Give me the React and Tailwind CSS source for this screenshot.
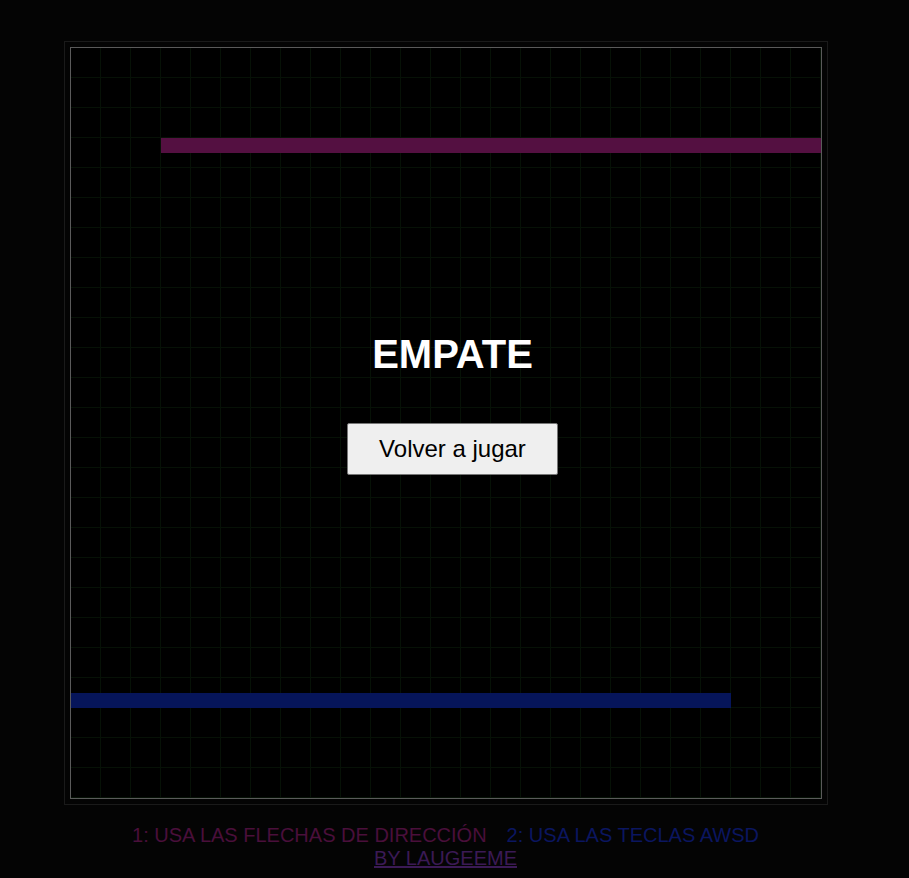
export default function App() {
  return (
    <div className="min-h-screen bg-[#040404] font-['Liberation_Sans',Arial,sans-serif]">
      <div className="w-[891px] flex flex-col items-center pt-[41px]">
        <div className="border border-[#1a1a1a] p-[5px]">
          <div className="relative w-[752px] h-[752px] border border-[#5a5a5a] bg-black bg-[linear-gradient(to_right,transparent_29px,#061106_29px),linear-gradient(to_bottom,transparent_29px,#061106_29px)] bg-[length:30px_30px]">
            {/* snakes */}
            <div className="absolute left-[90px] top-[90px] w-[660px] h-[15px] bg-[#541041]" />
            <div className="absolute left-0 top-[645px] w-[660px] h-[15px] bg-[#06155a]" />

            <div className="absolute inset-0 flex flex-col items-center pt-[283px] pl-[14px]">
              <h1 className="text-white font-bold text-[40px] leading-[46px]">EMPATE</h1>
              <button className="mt-[46px] w-[211px] h-[52px] bg-[#efefef] border border-[#767676] rounded-[2px] text-black text-[24px]">
                Volver a jugar
              </button>
            </div>
          </div>
        </div>

        <div className="mt-[19px] text-[20px] leading-[23px] text-center">
          <span className="text-[#4a0f3b]">1: USA LAS FLECHAS DE DIRECCIÓN</span>
          <span className="text-[#0b1660] ml-[20px]">2: USA LAS TECLAS AWSD</span>
          <div>
            <a href="#" className="underline text-[#3b1a55]">BY LAUGEEME</a>
          </div>
        </div>
      </div>
    </div>
  );
}
